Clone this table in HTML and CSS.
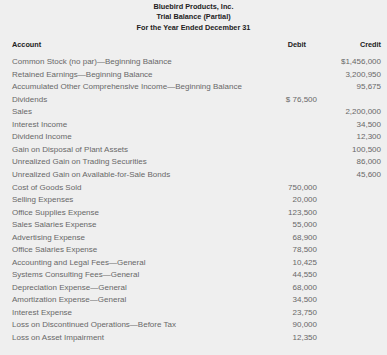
FILE: index.html
```html
<!DOCTYPE html>
<html>
<head>
<meta charset="utf-8">
<link rel="stylesheet" href="styles.css">
</head>
<body>
<div class="page">
  <div class="title">
    <div>Bluebird Products, Inc.</div>
    <div>Trial Balance (Partial)</div>
    <div>For the Year Ended December 31</div>
  </div>
  <div class="table">
    <div class="row head">
      <div class="acct">Account</div>
      <div class="debit">Debit</div>
      <div class="credit">Credit</div>
    </div>
    <div class="row"><div class="acct">Common Stock (no par)—Beginning Balance</div><div class="debit"></div><div class="credit">$1,456,000</div></div>
    <div class="row"><div class="acct">Retained Earnings—Beginning Balance</div><div class="debit"></div><div class="credit">3,200,950</div></div>
    <div class="row"><div class="acct">Accumulated Other Comprehensive Income—Beginning Balance</div><div class="debit"></div><div class="credit">95,675</div></div>
    <div class="row"><div class="acct">Dividends</div><div class="debit">$ 76,500</div><div class="credit"></div></div>
    <div class="row"><div class="acct">Sales</div><div class="debit"></div><div class="credit">2,200,000</div></div>
    <div class="row"><div class="acct">Interest Income</div><div class="debit"></div><div class="credit">34,500</div></div>
    <div class="row"><div class="acct">Dividend Income</div><div class="debit"></div><div class="credit">12,300</div></div>
    <div class="row"><div class="acct">Gain on Disposal of Plant Assets</div><div class="debit"></div><div class="credit">100,500</div></div>
    <div class="row"><div class="acct">Unrealized Gain on Trading Securities</div><div class="debit"></div><div class="credit">86,000</div></div>
    <div class="row"><div class="acct">Unrealized Gain on Available-for-Sale Bonds</div><div class="debit"></div><div class="credit">45,600</div></div>
    <div class="row"><div class="acct">Cost of Goods Sold</div><div class="debit">750,000</div><div class="credit"></div></div>
    <div class="row"><div class="acct">Selling Expenses</div><div class="debit">20,000</div><div class="credit"></div></div>
    <div class="row"><div class="acct">Office Supplies Expense</div><div class="debit">123,500</div><div class="credit"></div></div>
    <div class="row"><div class="acct">Sales Salaries Expense</div><div class="debit">55,000</div><div class="credit"></div></div>
    <div class="row"><div class="acct">Advertising Expense</div><div class="debit">68,900</div><div class="credit"></div></div>
    <div class="row"><div class="acct">Office Salaries Expense</div><div class="debit">78,500</div><div class="credit"></div></div>
    <div class="row"><div class="acct">Accounting and Legal Fees—General</div><div class="debit">10,425</div><div class="credit"></div></div>
    <div class="row"><div class="acct">Systems Consulting Fees—General</div><div class="debit">44,550</div><div class="credit"></div></div>
    <div class="row"><div class="acct">Depreciation Expense—General</div><div class="debit">68,000</div><div class="credit"></div></div>
    <div class="row"><div class="acct">Amortization Expense—General</div><div class="debit">34,500</div><div class="credit"></div></div>
    <div class="row"><div class="acct">Interest Expense</div><div class="debit">23,750</div><div class="credit"></div></div>
    <div class="row"><div class="acct">Loss on Discontinued Operations—Before Tax</div><div class="debit">90,000</div><div class="credit"></div></div>
    <div class="row"><div class="acct">Loss on Asset Impairment</div><div class="debit">12,350</div><div class="credit"></div></div>
  </div>
</div>
</body>
</html>
```

FILE: styles.css
```css
html, body {
  margin: 0;
  padding: 0;
  background: #efefef;
}
body {
  width: 387px;
  height: 355px;
  overflow: hidden;
  font-family: "Liberation Sans", Arial, sans-serif;
  font-size: 8px;
  color: #686868;
}
.page {
  padding: 2px 6px 0 12px;
}
.title {
  text-align: center;
  font-weight: bold;
  font-size: 7.3px;
  line-height: 10.4px;
  color: #222222;
  margin-left: -6px;
}
.table {
  margin-top: 5.8px;
}
.row {
  display: grid;
  grid-template-columns: 1fr 72px 64px;
  line-height: 12.53px;
  white-space: nowrap;
}
.row .debit, .row .credit {
  text-align: right;
}
.head {
  font-weight: bold;
  font-size: 7.3px;
  color: #222222;
  margin-bottom: 4.7px;
}
.head .debit {
  padding-right: 11px;
}
```
